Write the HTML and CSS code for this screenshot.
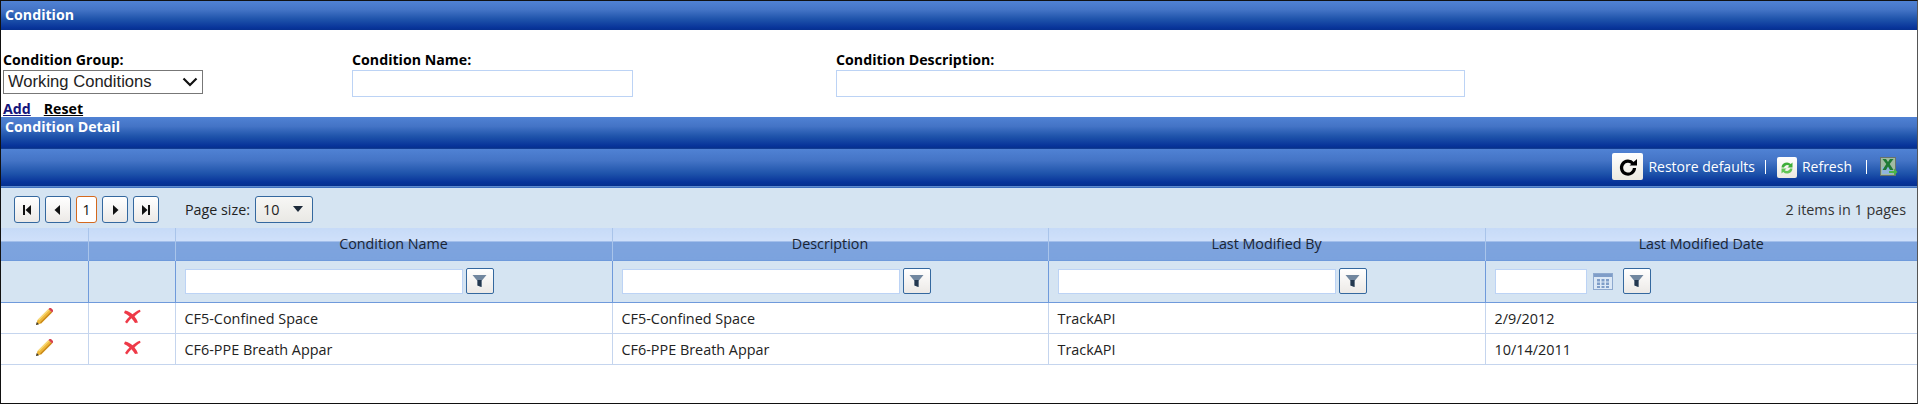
FILE: index.html
```html
<!DOCTYPE html>
<html lang="en">
<head>
<meta charset="utf-8">
<title>Condition</title>
<link rel="stylesheet" href="styles.css">
</head>
<body>
<div class="page">
  <div class="bar bar-main">Condition</div>
  <form class="form">
    <div class="fields">
      <div class="field field-group">
        <label class="lbl" for="g">Condition Group:</label>
        <span class="sel-wrap">
          <select id="g" class="sel"><option>Working Conditions</option></select>
          <svg class="chev" width="16" height="10" viewBox="0 0 16 10"><path d="M1.500 1.500L8 8l6.500-6.500" fill="none" stroke="#111" stroke-width="2.200"/></svg>
        </span>
      </div>
      <div class="field field-name">
        <label class="lbl" for="n">Condition Name:</label>
        <input id="n" class="txt txt-name" type="text">
      </div>
      <div class="field">
        <label class="lbl" for="d">Condition Description:</label>
        <input id="d" class="txt txt-desc" type="text">
      </div>
    </div>
    <div class="actions"><a class="act act-add" href="#">Add</a><a class="act" href="#">Reset</a></div>
  </form>
  <div class="bar bar-detail">Condition Detail</div>
  <div class="toolbar">
    <span class="tool-ico tool-ico-lg">
      <svg width="24" height="22" viewBox="0 0 24 22"><path d="M17 7.500A6.500 6.500 0 1 0 18.500 12" fill="none" stroke="#000" stroke-width="3.200"/><path d="M13.500 9.500H21V3z" fill="#000"/></svg>
    </span>
    <span class="tool-txt">Restore defaults</span><span class="sep"></span>
    <span class="tool-ico tool-ico-sm">
      <svg width="16" height="16" viewBox="0 0 16 16"><path d="M2.500 7.500a5.500 5.500 0 0 1 9.300-3.500L13.500 2.500v5H8.500l1.800-1.800A3.300 3.300 0 0 0 5 7.500z" fill="#3fae3a"/><path d="M13.500 8.500A5.500 5.500 0 0 1 4.200 12L2.500 13.500v-5h5L5.700 10.300A3.300 3.300 0 0 0 11 8.500z" fill="#62c655"/></svg>
    </span>
    <span class="tool-txt tool-refresh">Refresh</span><span class="sep sep-2"></span>
    <svg class="xls" width="18" height="20" viewBox="0 0 18 20"><rect x=".5" y=".5" width="15" height="18" fill="#9fbba2" stroke="#68736b"/><rect x="2" y="10" width="10" height="7" fill="#8fb4dc"/><path d="M2.500 2h3.500l2 3 2-3h3.500l-3.800 5L13.500 13H10L8 9.500 6 13H2.500l3.800-6z" fill="#1f7a35"/><path d="M9 14h5v-2.500l3.500 3.500-3.500 3.500V16H9z" fill="#49b548"/></svg>
  </div>
  <div class="pager">
    <div class="pager-left">
      <button class="pg" type="button"><svg width="10" height="12" viewBox="0 0 10 12"><path d="M1 1h2v10H1zM9 1v10L3.500 6z"/></svg></button>
      <button class="pg" type="button"><svg width="10" height="12" viewBox="0 0 10 12"><path d="M7 1v10L1.500 6z"/></svg></button>
      <span class="pg pg-cur">1</span>
      <button class="pg" type="button"><svg width="10" height="12" viewBox="0 0 10 12"><path d="M3 1v10l5.500-5z"/></svg></button>
      <button class="pg" type="button"><svg width="10" height="12" viewBox="0 0 10 12"><path d="M1 1v10l5.500-5zM7 1h2v10H7z"/></svg></button>
      <span class="ps-lbl">Page size:</span>
      <span class="ps"><span>10</span><svg width="12" height="7" viewBox="0 0 12 7"><path d="M1 0h10L6 6z" fill="#1d2a3a"/></svg></span>
    </div>
    <div class="pager-info">2 items in 1 pages</div>
  </div>
  <table class="grid">
    <colgroup><col class="c-ico"><col class="c-ico"><col class="c-a"><col class="c-b"><col class="c-a"><col></colgroup>
    <thead>
      <tr class="hdr"><th></th><th></th><th>Condition Name</th><th>Description</th><th>Last Modified By</th><th>Last Modified Date</th></tr>
      <tr class="flt">
        <td></td><td></td>
        <td><div class="flt-in"><input class="txt flt-txt" type="text"><span class="fbtn"><svg width="15" height="14" viewBox="0 0 15 14"><path d="M.5 1h14L9.500 7v6l-4-1.500V7z" fill="#71879f"/><path d="M5.500 6h4v7l-4-1.500z" fill="#24384f"/></svg></span></div></td>
        <td><div class="flt-in"><input class="txt flt-txt" type="text"><span class="fbtn"><svg width="15" height="14" viewBox="0 0 15 14"><path d="M.5 1h14L9.500 7v6l-4-1.500V7z" fill="#71879f"/><path d="M5.500 6h4v7l-4-1.500z" fill="#24384f"/></svg></span></div></td>
        <td><div class="flt-in"><input class="txt flt-txt" type="text"><span class="fbtn"><svg width="15" height="14" viewBox="0 0 15 14"><path d="M.5 1h14L9.500 7v6l-4-1.500V7z" fill="#71879f"/><path d="M5.500 6h4v7l-4-1.500z" fill="#24384f"/></svg></span></div></td>
        <td><div class="flt-in"><input class="txt flt-date" type="text">
          <svg class="cal" width="20" height="17" viewBox="0 0 20 17"><rect x=".5" y=".5" width="19" height="16" fill="#dce8f6" stroke="#8ea9cf"/><rect x="1" y="1" width="18" height="3" fill="#7f9dc8"/><path d="M4 6h3v2.500H4zM8.500 6h3v2.500h-3zM13 6h3v2.500h-3zM4 9.500h3v2.500H4zM8.500 9.500h3v2.500h-3zM13 9.500h3v2.500h-3zM4 13h3v2H4zM8.500 13h3v2h-3zM13 13h3v2h-3z" fill="#7f9dc8"/></svg>
          <span class="fbtn"><svg width="15" height="14" viewBox="0 0 15 14"><path d="M.5 1h14L9.500 7v6l-4-1.500V7z" fill="#71879f"/><path d="M5.500 6h4v7l-4-1.500z" fill="#24384f"/></svg></span></div></td>
      </tr>
    </thead>
    <tbody>
      <tr>
        <td class="ico"><svg width="19" height="19" viewBox="0 0 19 19"><path d="M1 18l1.500-5L13.500 2l3.500 3.500L6 16.500z" fill="#eeb73a"/><path d="M3 12.500L13.500 2l1 1L4 13.500z" fill="#f8dc7a"/><path d="M6 16.500L17 5.500l-1-1L5 15.500z" fill="#c98a1c"/><path d="M13.500 2l1-1h1.500l2 2v1.500l-1 1z" fill="#d8414c"/><path d="M1 18l.8-3 2.200 2.200z" fill="#333"/></svg></td>
        <td class="ico ico-x"><svg width="17" height="15" viewBox="0 0 17 15"><path d="M1 1.500c3 .5 5.500 2 7.500 3.800C10.500 3.500 13 1.800 16 .8l.5 2c-2.500 1.200-4.500 3-6 4.700 1.500 1.800 2.700 3.800 3.500 6L11 14c-1-1.800-2.300-3.500-3.600-4.800C5.800 10.800 4.300 12.500 3 14.500L1 13C2.300 11 3.800 9 5.500 7.500 3.800 6 2 4.800 0 4z" fill="#ee3a48"/></svg></td>
        <td>CF5-Confined Space</td><td>CF5-Confined Space</td><td>TrackAPI</td><td>2/9/2012</td>
      </tr>
      <tr>
        <td class="ico"><svg width="19" height="19" viewBox="0 0 19 19"><path d="M1 18l1.500-5L13.500 2l3.500 3.500L6 16.500z" fill="#eeb73a"/><path d="M3 12.500L13.500 2l1 1L4 13.500z" fill="#f8dc7a"/><path d="M6 16.500L17 5.500l-1-1L5 15.500z" fill="#c98a1c"/><path d="M13.500 2l1-1h1.500l2 2v1.500l-1 1z" fill="#d8414c"/><path d="M1 18l.8-3 2.200 2.200z" fill="#333"/></svg></td>
        <td class="ico ico-x"><svg width="17" height="15" viewBox="0 0 17 15"><path d="M1 1.500c3 .5 5.500 2 7.500 3.800C10.500 3.500 13 1.800 16 .8l.5 2c-2.500 1.200-4.500 3-6 4.700 1.500 1.800 2.700 3.800 3.500 6L11 14c-1-1.800-2.300-3.500-3.600-4.800C5.800 10.800 4.300 12.500 3 14.500L1 13C2.300 11 3.800 9 5.500 7.500 3.800 6 2 4.800 0 4z" fill="#ee3a48"/></svg></td>
        <td>CF6-PPE Breath Appar</td><td>CF6-PPE Breath Appar</td><td>TrackAPI</td><td>10/14/2011</td>
      </tr>
    </tbody>
  </table>
</div>
</body>
</html>
```
FILE: styles.css
```css
* { box-sizing: border-box; }
html, body { margin: 0; padding: 0; }
body { width: 1918px; height: 404px; overflow: hidden; background: #fff; font-family: "Open Sans", "Noto Sans", sans-serif; font-size: 14.4px; color: #222; }
.page { width: 1918px; height: 404px; border: 1px solid #111; border-right-color: #555; overflow: hidden; }
.bar { background: linear-gradient(#5082d4 0%, #4474c6 30%, #1f54ab 62%, #08349a 92%, #06308f 100%); color: #fff; font-weight: 700; font-size: 14.2px; padding-left: 4px; }
.bar-main { height: 29px; line-height: 27px; }
.bar-detail { height: 32px; line-height: 20px; border-bottom: 1px solid #123c92; }
.form { height: 87px; padding: 20px 0 0 2px; display: flex; flex-direction: column; }
.fields { display: flex; height: 52px; }
.field { display: flex; flex-direction: column; }
.field-group { width: 349px; }
.field-name { width: 484px; }
.lbl { font-weight: 700; color: #000; font-size: 14.2px; line-height: 20px; height: 20px; }
.sel-wrap { position: relative; width: 200px; height: 24px; display: block; }
.sel { appearance: none; -webkit-appearance: none; display: block; width: 200px; height: 24px; font-family: "Liberation Sans", sans-serif; font-size: 16.6px; color: #222; background: #fff; border: 1px solid #777; border-radius: 0; padding: 0 0 2px 4px; }
.chev { position: absolute; right: 5px; top: 7px; }
.txt { border: 1px solid #bcd3f5; background: #fff; height: 27px; padding: 0 4px; font-size: 13px; outline: none; }
.txt-name { width: 281px; }
.txt-desc { width: 629px; }
.actions { display: flex; gap: 13px; margin-top: 1px; }
.act { color: #000; font-weight: 700; font-size: 14.2px; line-height: 17px; text-decoration: underline; }
.act-add { color: #14147a; }
.toolbar { height: 39px; display: flex; align-items: center; justify-content: flex-end; padding: 0 19px 4px 0; background: linear-gradient(#5082d4 0%, #4474c6 30%, #1f54ab 62%, #08349a 85%, #06308f 94%, #6a95d4 95%, #3063b8 100%); color: #fff; font-size: 14px; }
.tool-ico { display: inline-flex; align-items: center; justify-content: center; background: linear-gradient(#fff, #ece9e0); border-radius: 2px; }
.tool-ico-lg { width: 31px; height: 27px; margin-right: 5px; }
.tool-ico-sm { width: 20px; height: 21px; margin-right: 5px; margin-top: 2px; }
.tool-txt { line-height: 20px; }
.sep { width: 1px; height: 14px; background: #fff; margin: 0 11px 0 10px; }
.sep-2 { margin: 0 13px 0 14px; }
.xls { display: block; }
.pager { height: 40px; background: #d5e4f2; display: flex; justify-content: space-between; align-items: flex-start; padding: 8px 11px 0 13px; }
.pager-left { display: flex; align-items: center; gap: 5px; }
.pg { width: 26px; height: 27px; padding: 0; border: 1px solid #34689f; border-radius: 3px; background: linear-gradient(#fff, #ece9e6); display: inline-flex; align-items: center; justify-content: center; font-size: 14px; color: #111; }
.pg svg { fill: #111; }
.pg-cur { width: 21px; background: #fff; border-color: #d4691e; }
.ps-lbl { margin-left: 21px; font-size: 14.3px; color: #222; }
.ps { width: 58px; height: 27px; border: 1px solid #34689f; border-radius: 3px; background: linear-gradient(#f7f7f5, #e9e8e4); display: inline-flex; align-items: center; justify-content: space-between; padding: 0 8px 0 7px; font-size: 14.4px; }
.pager-info { font-size: 14.4px; color: #333; line-height: 27px; }
.grid { width: 1916px; border-collapse: collapse; table-layout: fixed; }
.c-ico { width: 87px; }
.c-a { width: 437px; }
.c-b { width: 436px; }
.hdr th { height: 32px; padding: 0; font-weight: 400; font-size: 14.3px; color: #1a2433; border-left: 1px solid #a9c4ea; background: linear-gradient(#c6daf7 0%, #cfe0fa 40%, #7ea4de 44%, #7ba2de 100%); }
.hdr th:first-child { border-left: 0; }
.flt td { height: 42px; padding: 0; background: #d5e4f2; border-left: 1px solid #6f9adb; border-top: 1px solid #6f9adb; border-bottom: 1px solid #6f9adb; }
.flt td:first-child { border-left: 0; }
.flt-in { display: flex; align-items: center; padding-left: 9px; }
.flt-txt { width: 278px; height: 25px; }
.flt-date { width: 92px; height: 25px; }
.cal { margin-left: 6px; }
.fbtn { width: 28px; height: 26px; margin-left: 3px; border: 1px solid #34689f; border-radius: 2px; background: linear-gradient(#fff, #ece9e6); display: inline-flex; align-items: center; justify-content: center; }
.cal + .fbtn { margin-left: 10px; }
tbody td { height: 31px; padding: 1px 0 0 9px; font-size: 14.4px; color: #222; border-left: 1px solid #c5d5ee; border-bottom: 1px solid #c5d5ee; }
tbody td:first-child { border-left: 0; }
.ico { padding: 0; text-align: center; }
.ico svg { display: block; margin: -3px auto 0; }
.ico-x svg { transform: translateX(1px); }
```
